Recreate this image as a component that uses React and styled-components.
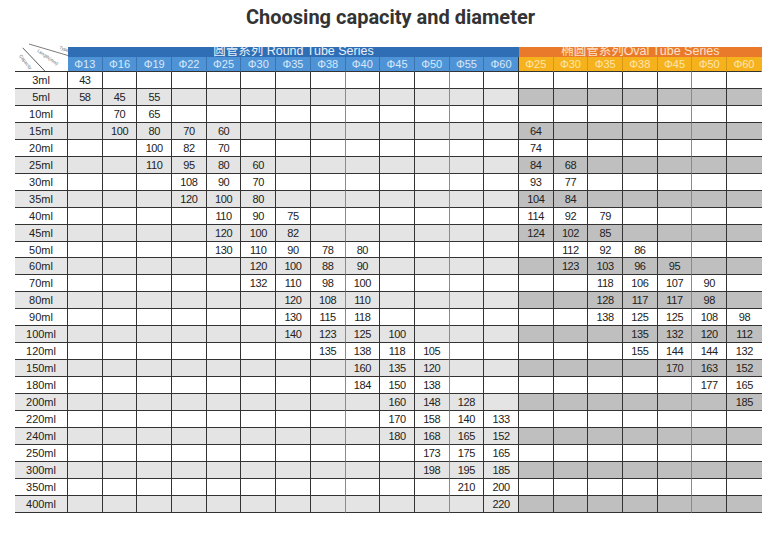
import React from 'react';
import styled, { createGlobalStyle } from 'styled-components';

const GlobalStyle = createGlobalStyle`
  html, body { margin: 0; padding: 0; background: #fff; }
  body { font-family: "Liberation Sans", Arial, sans-serif; }
`;

const Page = styled.div`
  width: 781px;
  height: 538px;
  overflow: hidden;
  background: #fff;
`;

const Title = styled.h1`
  margin: 0;
  padding-top: 5px;
  font-family: Roboto, "Liberation Sans", sans-serif;
  font-weight: 700;
  font-size: 20px;
  line-height: 24px;
  color: #333;
  text-align: center;
`;

const Grid = styled.div`
  display: grid;
  grid-template-columns: 53px repeat(20, 34.7px);
  grid-template-rows: 10px 15.5px repeat(26, 16.96px);
  margin: 17.5px 0 0 15px;
  width: 747px;
`;

const Corner = styled.div`
  grid-row: 1 / 3;
  grid-column: 1;
  position: relative;
  border-bottom: 1px solid #333;
  box-sizing: border-box;
`;

const CornerArt = styled.svg`
  position: absolute;
  left: 0;
  top: -6px;
  overflow: visible;
`;

const SeriesBar = styled.div`
  grid-row: 1;
  grid-column: span ${(p) => p.$span};
  background: ${(p) => p.$bg};
  overflow: hidden;
  display: flex;
  justify-content: center;
  align-items: flex-end;
  color: ${(p) => p.$fg};
  font-size: 12.5px;
  white-space: nowrap;
  font-family: "Liberation Sans", "Noto Sans CJK SC", sans-serif;
`;

const SeriesText = styled.span`
  display: block;
  line-height: 12px;
  flex: none;
`;

const PhiCell = styled.div`
  grid-row: 2;
  background: ${(p) => p.$bg};
  color: ${(p) => p.$fg};
  font-size: 11px;
  display: flex;
  align-items: center;
  justify-content: center;
  box-sizing: border-box;
  border-bottom: 1px solid #333;
  border-right: 1px solid ${(p) => p.$line};
`;

const Label = styled.div`
  background: ${(p) => (p.$alt ? '#e6e6e6' : '#fff')};
  color: #222;
  font-size: 11px;
  display: flex;
  align-items: center;
  justify-content: center;
  box-sizing: border-box;
  border-bottom: 1px solid #333;
  border-right: 1px solid #333;
`;

const Cell = styled.div`
  background: ${(p) => p.$bg};
  color: #222;
  font-size: 11px;
  letter-spacing: -0.4px;
  display: flex;
  align-items: center;
  justify-content: center;
  box-sizing: border-box;
  border-bottom: 1px solid #333;
  border-right: ${(p) => (p.$last ? 'none' : `1px solid ${p.$line}`)};
`;

const blueCols = ['Φ13', 'Φ16', 'Φ19', 'Φ22', 'Φ25', 'Φ30', 'Φ35', 'Φ38', 'Φ40', 'Φ45', 'Φ50', 'Φ55', 'Φ60'];
const orangeCols = ['Φ25', 'Φ30', 'Φ35', 'Φ38', 'Φ45', 'Φ50', 'Φ60'];

const rows = [
  ['3ml', [0, 43], null],
  ['5ml', [0, 58, 45, 55], null],
  ['10ml', [1, 70, 65], null],
  ['15ml', [1, 100, 80, 70, 60], [0, 64]],
  ['20ml', [2, 100, 82, 70], [0, 74]],
  ['25ml', [2, 110, 95, 80, 60], [0, 84, 68]],
  ['30ml', [3, 108, 90, 70], [0, 93, 77]],
  ['35ml', [3, 120, 100, 80], [0, 104, 84]],
  ['40ml', [4, 110, 90, 75], [0, 114, 92, 79]],
  ['45ml', [4, 120, 100, 82], [0, 124, 102, 85]],
  ['50ml', [4, 130, 110, 90, 78, 80], [1, 112, 92, 86]],
  ['60ml', [5, 120, 100, 88, 90], [1, 123, 103, 96, 95]],
  ['70ml', [5, 132, 110, 98, 100], [2, 118, 106, 107, 90]],
  ['80ml', [6, 120, 108, 110], [2, 128, 117, 117, 98]],
  ['90ml', [6, 130, 115, 118], [2, 138, 125, 125, 108, 98]],
  ['100ml', [6, 140, 123, 125, 100], [3, 135, 132, 120, 112]],
  ['120ml', [7, 135, 138, 118, 105], [3, 155, 144, 144, 132]],
  ['150ml', [8, 160, 135, 120], [4, 170, 163, 152]],
  ['180ml', [8, 184, 150, 138], [5, 177, 165]],
  ['200ml', [9, 160, 148, 128], [6, 185]],
  ['220ml', [9, 170, 158, 140, 133], null],
  ['240ml', [9, 180, 168, 165, 152], null],
  ['250ml', [10, 173, 175, 165], null],
  ['300ml', [10, 198, 195, 185], null],
  ['350ml', [11, 210, 200], null],
  ['400ml', [12, 220], null],
];

const expand = (spec, n) => {
  const out = Array(n).fill('');
  if (!spec) return out;
  const [start, ...vals] = spec;
  vals.forEach((v, i) => {
    out[start + i] = v;
  });
  return out;
};

const lightLines = new Set([7, 10]);

export default function App() {
  return (
    <Page>
      <GlobalStyle />
      <Title>Choosing capacity and diameter</Title>
      <Grid>
        <Corner>
          <CornerArt width="53" height="32" viewBox="0 0 53 32">
            <line x1="7.7" y1="6.8" x2="30" y2="30.2" stroke="#333" strokeWidth="0.8" />
            <line x1="14" y1="3" x2="53" y2="14.5" stroke="#444" strokeWidth="0.7" />
            <text x="44" y="7.5" fontSize="4.5" fill="#666" transform="rotate(22 44 7.5)">Type</text>
            <text x="22" y="10.5" fontSize="4.5" fill="#666" transform="rotate(35 22 10.5)">Length(mm)</text>
            <text x="4" y="15" fontSize="4.5" fill="#666" transform="rotate(52 4 15)">Capacity</text>
          </CornerArt>
        </Corner>
        <SeriesBar $span={13} $bg="#2f6eb5" $fg="#e6f0fa">
          <SeriesText>圆管系列 Round Tube Series</SeriesText>
        </SeriesBar>
        <SeriesBar $span={7} $bg="#e97a2c" $fg="#fbe0c8">
          <SeriesText>椭圆管系列Oval Tube Series</SeriesText>
        </SeriesBar>
        {blueCols.map((c, i) => (
          <PhiCell
            key={'b' + i}
            $bg="#4f93d7"
            $fg="#d9e9f8"
            $line={i === blueCols.length - 1 ? '#333' : 'rgba(20,60,110,0.35)'}
          >
            {c}
          </PhiCell>
        ))}
        {orangeCols.map((c, i) => (
          <PhiCell
            key={'o' + i}
            $bg="#f6b21c"
            $fg="#fde6ae"
            $line={i === orangeCols.length - 1 ? 'transparent' : 'rgba(140,90,0,0.3)'}
          >
            {c}
          </PhiCell>
        ))}
        {rows.map(([label, b, o], ri) => {
          const alt = ri % 2 === 1;
          const bv = expand(b, 13);
          const ov = expand(o, 7);
          return (
            <React.Fragment key={label}>
              <Label $alt={alt}>{label}</Label>
              {bv.map((v, i) => (
                <Cell
                  key={'b' + i}
                  $bg={alt ? '#e4e4e4' : '#fff'}
                  $line={lightLines.has(i) ? '#8a8a8a' : '#333'}
                >
                  {v}
                </Cell>
              ))}
              {ov.map((v, i) => (
                <Cell
                  key={'o' + i}
                  $bg={alt ? '#bfbfbf' : '#fff'}
                  $line={i === 4 ? '#8a8a8a' : '#333'}
                  $last={i === 6}
                >
                  {v}
                </Cell>
              ))}
            </React.Fragment>
          );
        })}
      </Grid>
    </Page>
  );
}
